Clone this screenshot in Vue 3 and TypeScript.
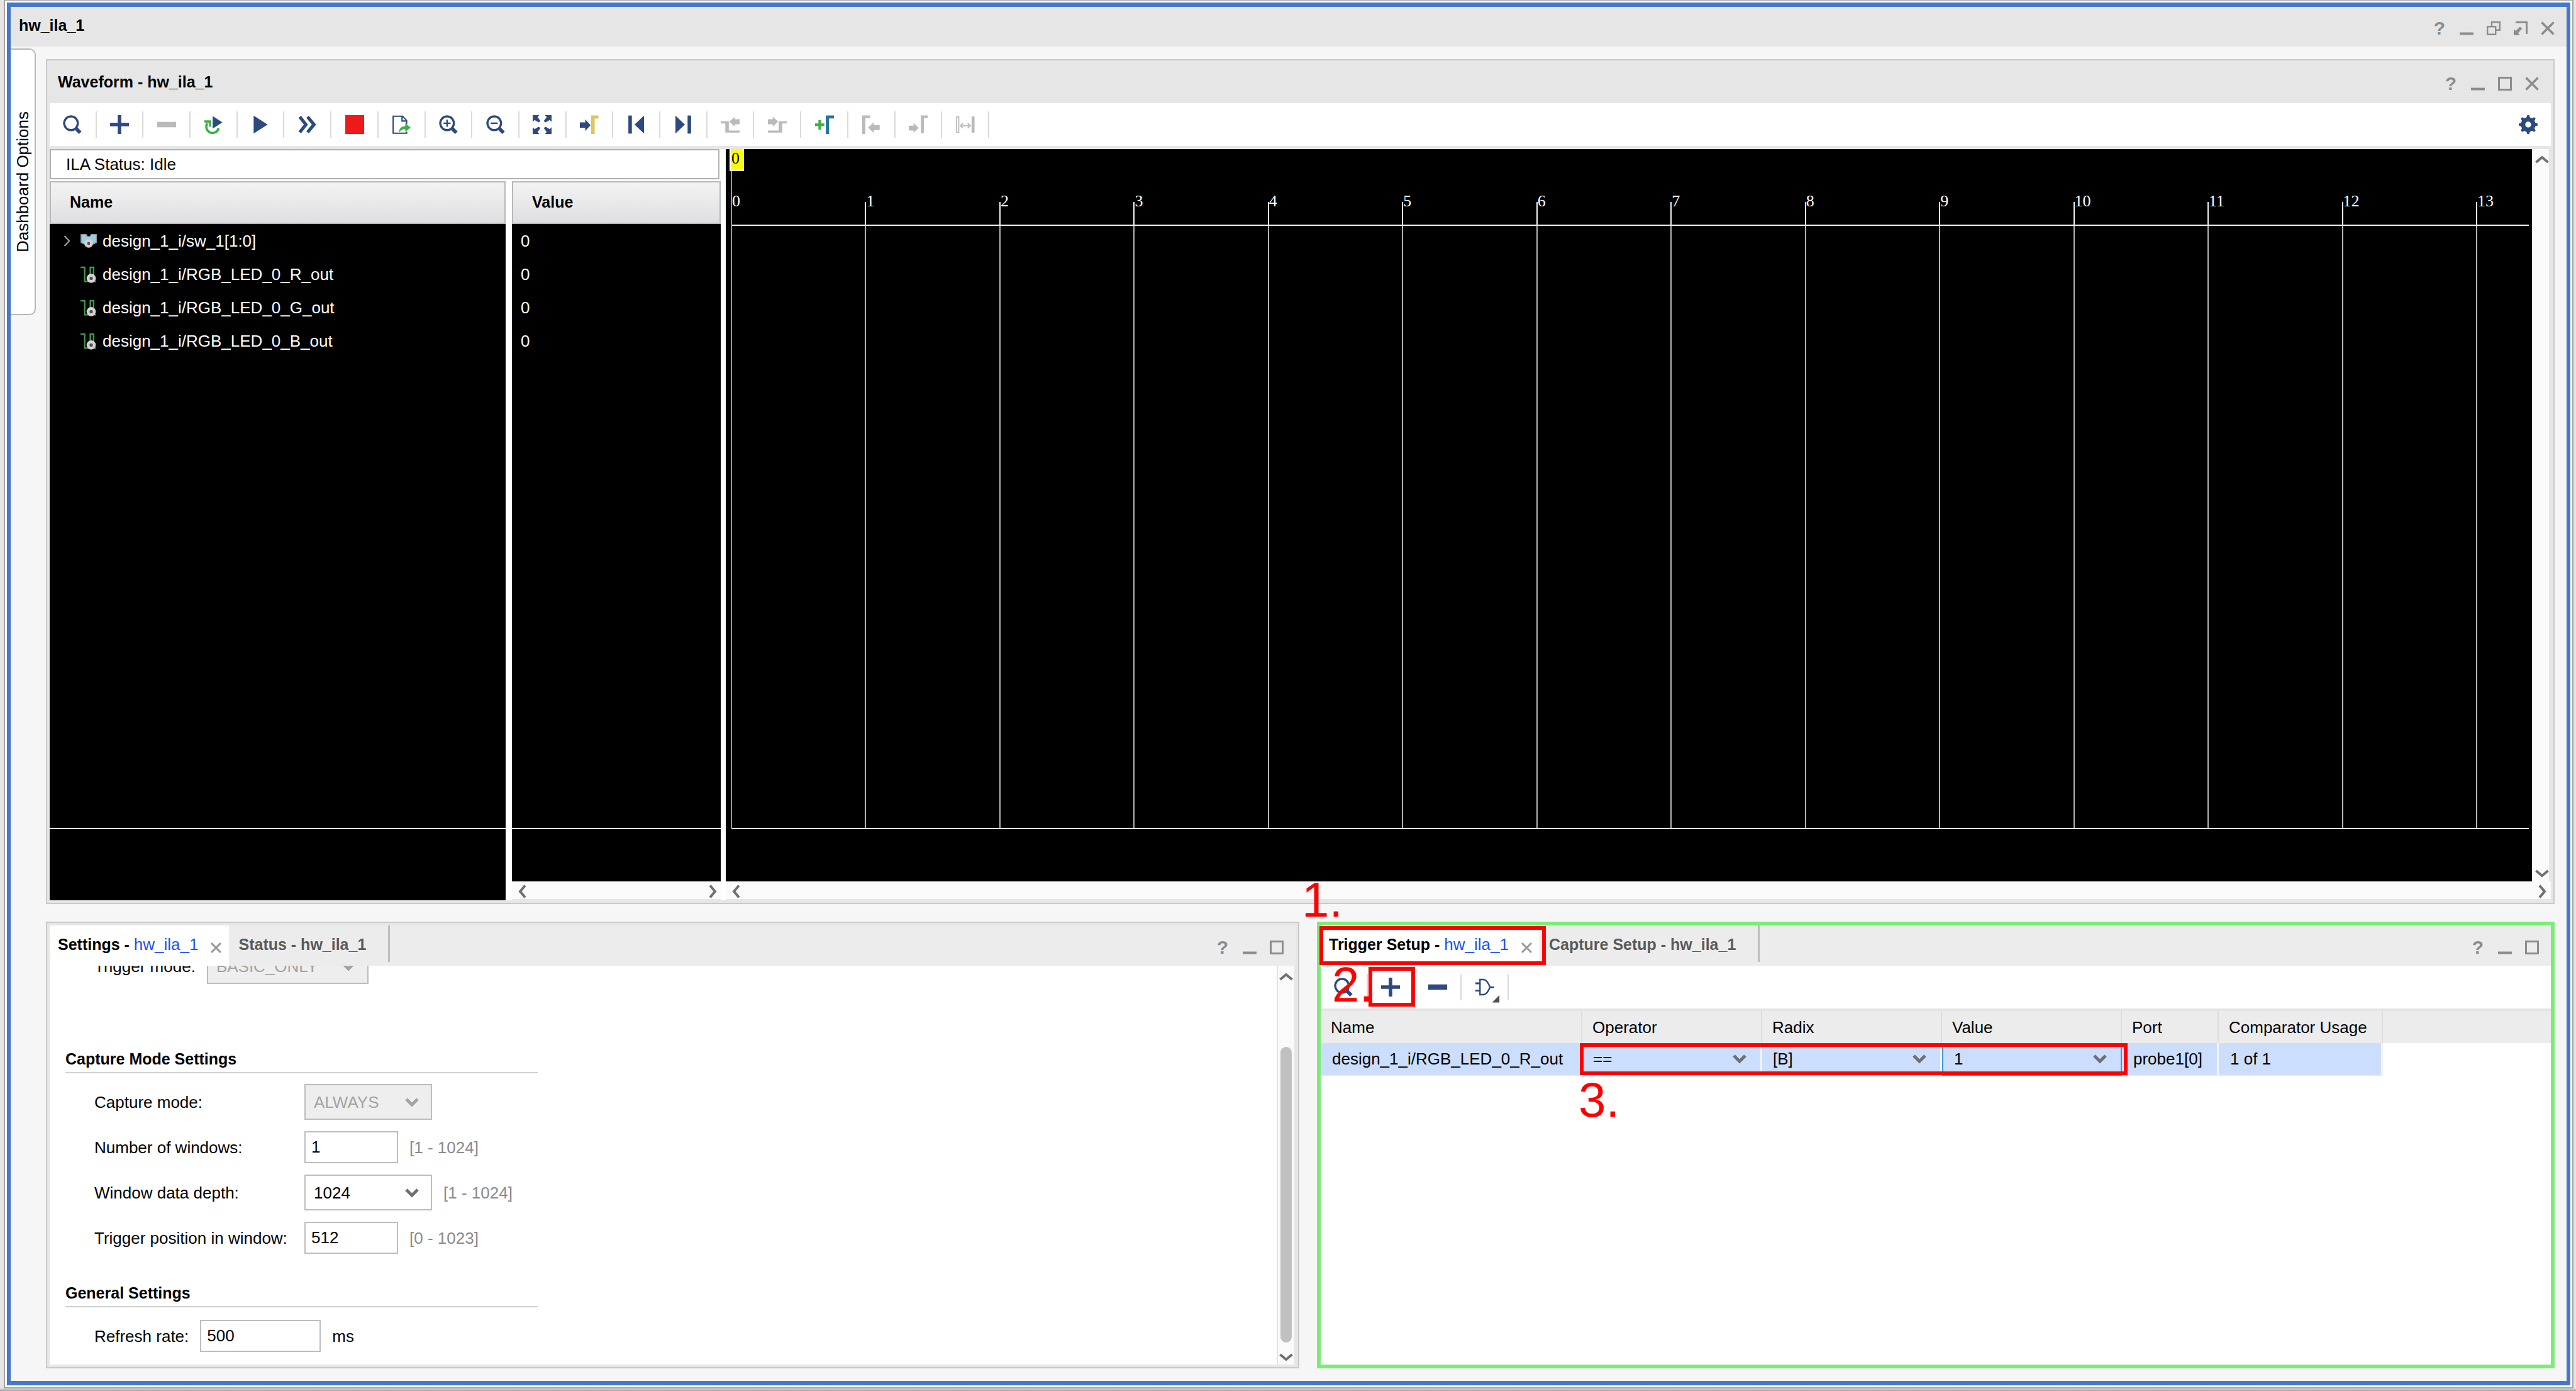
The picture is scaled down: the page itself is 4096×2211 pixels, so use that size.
<script setup lang="ts">
import { ref } from 'vue'

interface Shape {
  d: string
  fill?: string
  stroke?: string
  width?: number
}
interface Tool {
  id: string
  label: string
  shapes: Shape[]
  disabled?: boolean
  divider?: boolean
}

const navy = '#2c4a80'
const grey = '#bababa'
const green = '#3cb043'

const search: Shape[] = [
  { d: 'M6 .9a5 5.1 0 1 0 .01 0z', stroke: navy, width: 1.6 },
  { d: 'M9.6 9.8L12.9 13.1', stroke: navy, width: 2.7 },
]
const plus: Shape[] = [{ d: 'M5.7 0h2.6v5.7H14v2.6H8.3V14H5.7V8.3H0V5.7h5.7z', fill: navy }]

const waveTools: Tool[] = [
  { id: 'search', label: 'Search', shapes: search },
  { id: 'add', label: 'Add', shapes: plus },
  { id: 'remove', label: 'Remove', disabled: true, shapes: [{ d: 'M0 5h14v4H0z', fill: grey }] },
  {
    id: 'auto',
    label: 'Auto re-trigger',
    shapes: [
      { d: 'M2.6 6.2A4.6 4.6 0 1 0 11 9.6', stroke: green, width: 1.7 },
      { d: 'M.4 3.8h5v4.8H3.9V5.9L.4 5.4z', fill: green },
      { d: 'M6.6 .7L13.8 5.4L6.6 10z', fill: navy },
    ],
  },
  { id: 'run', label: 'Run trigger', shapes: [{ d: 'M2 .3L12.4 7L2 13.7z', fill: navy }] },
  {
    id: 'immediate',
    label: 'Run trigger immediate',
    shapes: [
      { d: 'M1.2 1.2L5.8 7L1.2 12.8', stroke: navy, width: 2.4 },
      { d: 'M7 1.2L11.8 7L7 12.8', stroke: navy, width: 2.4 },
    ],
  },
  { id: 'stop', label: 'Stop trigger', shapes: [{ d: 'M0 0h14v14H0z', fill: '#ee1a1a' }] },
  {
    id: 'export',
    label: 'Export data',
    shapes: [
      { d: 'M11 6.6V4L8 .8H1v12.6h10v-1.2M7.6 1v3.4h3.2', stroke: navy, width: 1 },
      { d: 'M5.4 13C5.4 9.8 7 8.4 10 8.2V6L14 9.2L10 12.4V10.4C8 10.4 6.6 11.2 5.4 13z', fill: green },
    ],
  },
  {
    id: 'zoomin',
    label: 'Zoom in',
    shapes: [...search, { d: 'M3.4 6h5.2M6 3.4v5.2', stroke: navy, width: 1.1 }],
  },
  {
    id: 'zoomout',
    label: 'Zoom out',
    shapes: [...search, { d: 'M3.4 6h5.2', stroke: navy, width: 1.1 }],
  },
  {
    id: 'fit',
    label: 'Zoom fit',
    shapes: [
      { d: 'M0 0h5L3.6 1.4L5.8 4.4L4.4 5.4L1.4 3.6L0 5z', fill: navy },
      { d: 'M14 0v5L12.6 3.6L9.6 5.4L8.2 4.4L10.4 1.4L9 0z', fill: navy },
      { d: 'M0 14V9L1.4 10.4L4.4 8.6L5.8 9.6L3.6 12.6L5 14z', fill: navy },
      { d: 'M14 14H9L10.4 12.6L8.2 9.6L9.6 8.6L12.6 10.4L14 9z', fill: navy },
    ],
  },
  {
    id: 'cursor',
    label: 'Go to cursor',
    shapes: [
      { d: 'M0 5.4h4V3.2L8 7.5L4 11.8V9.4H0z', fill: navy },
      { d: 'M8.4 .2h5.4v2.4H11V14H8.4z', fill: '#dfc55a' },
    ],
  },
  {
    id: 'first',
    label: 'Go to first',
    shapes: [
      { d: 'M1 .3h2.6v13.4H1z', fill: navy },
      { d: 'M12.6 .3v13.4L5.6 7z', fill: navy },
    ],
  },
  {
    id: 'last',
    label: 'Go to last',
    shapes: [
      { d: 'M10.4 .3H13v13.4h-2.6z', fill: navy },
      { d: 'M1.4 .3v13.4L8.4 7z', fill: navy },
    ],
  },
  {
    id: 'prev',
    label: 'Previous transition',
    disabled: true,
    shapes: [
      { d: 'M0 4.6h6v6.8h8V13H3.4V6.2H0z', fill: grey },
      { d: 'M6.4 4.8L10.4 1.2V3H14v3.8h-3.6v1.8z', fill: grey },
    ],
  },
  {
    id: 'next',
    label: 'Next transition',
    disabled: true,
    shapes: [
      { d: 'M14 4.6H8v6.8H0V13h10.6V6.2H14z', fill: grey },
      { d: 'M7.6 4.8L3.6 1.2V3H0v3.8h3.6v1.8z', fill: grey },
    ],
  },
  {
    id: 'marker',
    label: 'Add marker',
    shapes: [
      { d: 'M2.5 3.6h2v2.6h2.4v2H4.5v2.6h-2V8.2H0v-2h2.5z', fill: green },
      { d: 'M8 .2h6v2.2h-3.6V14H8z', fill: '#2472a8' },
    ],
  },
  {
    id: 'prevmarker',
    label: 'Previous marker',
    disabled: true,
    shapes: [
      { d: 'M.4 .2h6v2H2.8V14H.4z', fill: grey },
      { d: 'M4.8 9.2L9 5.4v2h4.4v3.8H9v2z', fill: grey },
    ],
  },
  {
    id: 'nextmarker',
    label: 'Next marker',
    disabled: true,
    shapes: [
      { d: 'M9 .2h5v2h-2.8V13.4H9z', fill: grey },
      { d: 'M7.4 9.4L3.6 5.8v2H0v3.6h3.6v1.8z', fill: grey },
    ],
  },
  {
    id: 'swap',
    label: 'Swap cursors',
    disabled: true,
    shapes: [
      { d: 'M.5 1.2h1.6v11.6H.5z', stroke: grey, width: 0.8 },
      { d: 'M11.6 1h2.2v12h-2.2z', fill: grey },
      { d: 'M3.6 7.8h6.8M5.2 6L3.4 7.8L5.2 9.6M8.8 6L10.6 7.8L8.8 9.6', stroke: grey, width: 0.9 },
    ],
  },
]

const triggerTools: Tool[] = [
  { id: 'tsearch', label: 'Search probes', shapes: search },
  { id: 'tadd', label: 'Add probes', divider: false, shapes: plus },
  { id: 'tremove', label: 'Remove probes', shapes: [{ d: 'M0 5h14v4H0z', fill: navy }] },
  {
    id: 'gate',
    label: 'Trigger condition',
    shapes: [
      { d: 'M3.4 1.4H6C8.4 1.6 9.6 3.8 10.8 7C9.6 10.2 8.4 12.4 6 12.6H3.4z', stroke: navy, width: 1.1 },
      { d: 'M0 4.2h3.4M0 9.6h3.4M10.6 7.2H14', stroke: navy, width: 1.3 },
      { d: 'M17.8 13v5.4h-5.4z', fill: '#505050' },
    ],
  },
]

const winIcons: Record<string, Shape[]> = {
  Minimize: [{ d: 'M0 17.5h22v4H0z', fill: '#8c8c8c' }],
  Maximize: [{ d: 'M1.5 1.5h19v19h-19z', stroke: '#8c8c8c', width: 3 }],
  Restore: [{ d: 'M1.2 8.2h13v12.6h-13zM8 8V1.2h12.8v12.6H15', stroke: '#8c8c8c', width: 2.4 }],
  Float: [
    { d: 'M3 1.5h17.5V20', stroke: '#8c8c8c', width: 3 },
    { d: 'M0 22V12.4L3.2 15L10 8.4L13.2 11.6L7 18.4L9.6 22z', fill: '#8c8c8c' },
  ],
  Close: [{ d: 'M1.5 1.5L20.5 20.5M20.5 1.5L1.5 20.5', stroke: '#8c8c8c', width: 3.6 }],
}
const outerButtons = ['Minimize', 'Restore', 'Float', 'Close']
const waveButtons = ['Minimize', 'Maximize', 'Close']
const dockButtons = ['Minimize', 'Maximize']

const signals = [
  { name: 'design_1_i/sw_1[1:0]', value: '0', bus: true },
  { name: 'design_1_i/RGB_LED_0_R_out', value: '0', bus: false },
  { name: 'design_1_i/RGB_LED_0_G_out', value: '0', bus: false },
  { name: 'design_1_i/RGB_LED_0_B_out', value: '0', bus: false },
]
const ticks = Array.from({ length: 14 }, (_, i) => i)

const windows = ref('1')
const position = ref('512')
const refresh = ref('500')
const gearTeeth = [0, 45, 90, 135, 180, 225, 270, 315]
</script>

<template>
  <div class="desktop">
    <main class="window">
      <header class="titlebar outer">
        <h1>hw_ila_1</h1>
        <div class="winbtns">
          <button type="button" class="help" aria-label="Help">?</button>
          <button v-for="b in outerButtons" :key="b" type="button" :aria-label="b">
            <svg viewBox="0 0 22 22"><path v-for="(s, i) in winIcons[b]" :key="i" :d="s.d" :fill="s.fill ?? 'none'" :stroke="s.stroke" :stroke-width="s.width" /></svg>
          </button>
        </div>
      </header>

      <div class="work">
        <button type="button" class="sidetab"><span>Dashboard Options</span></button>

        <div class="docks">
          <section class="panel wave">
            <header class="titlebar">
              <h2>Waveform - hw_ila_1</h2>
              <div class="winbtns">
                <button type="button" class="help" aria-label="Help">?</button>
                <button v-for="b in waveButtons" :key="b" type="button" :aria-label="b">
                  <svg viewBox="0 0 22 22"><path v-for="(s, i) in winIcons[b]" :key="i" :d="s.d" :fill="s.fill ?? 'none'" :stroke="s.stroke" :stroke-width="s.width" /></svg>
                </button>
              </div>
            </header>

            <div class="toolbar">
              <div class="tools twenty">
                <button v-for="t in waveTools" :key="t.id" type="button" :disabled="t.disabled" :aria-label="t.label">
                  <svg viewBox="0 0 14 14"><path v-for="(s, i) in t.shapes" :key="i" :d="s.d" :fill="s.fill ?? 'none'" :stroke="s.stroke" :stroke-width="s.width" /></svg>
                </button>
              </div>
              <button type="button" class="gear" aria-label="Settings">
                <svg viewBox="-7 -7 14 14">
                  <circle r="3.8" fill="none" stroke="#2c4a80" stroke-width="3.2" />
                  <path v-for="a in gearTeeth" :key="a" d="M-1.5 -4.8L-.7 -7H.7L1.5 -4.8z" fill="#2c4a80" :transform="`rotate(${a})`" />
                </svg>
              </button>
            </div>

            <div class="wavebody">
              <div class="lists">
                <p class="status">ILA Status: Idle</p>
                <div class="cols">
                  <div class="col names">
                    <h3>Name</h3>
                    <ul class="rows">
                      <li v-for="s in signals" :key="s.name">
                        <svg class="expander" viewBox="0 0 11 18"><path v-if="s.bus" d="M1.5 1L9 9L1.5 17" fill="none" stroke="#9a9a9a" stroke-width="2.4" /></svg>
                        <svg v-if="s.bus" class="sig" viewBox="0 0 26 26">
                          <path d="M.8 2.8H9L11 6H15L17 2.8H25.2V15.5L20 18H6L.8 15.5z" fill="#a1cde0" stroke="#8a969c" stroke-width="1.6" />
                          <circle cx="13" cy="17" r="4.6" fill="#555" stroke="#d6d2d4" stroke-width="4.4" />
                        </svg>
                        <svg v-else class="sig" viewBox="0 0 26 26">
                          <path d="M0 2H6.6V24.4H25M15.6 22V2H20.8V14" fill="none" stroke="#3f9a4c" stroke-width="2.4" />
                          <circle cx="17" cy="19.4" r="5" fill="#555" stroke="#d6d2d4" stroke-width="4.6" />
                        </svg>
                        <span>{{ s.name }}</span>
                      </li>
                    </ul>
                    <div class="tail tall"></div>
                  </div>
                  <div class="col values">
                    <h3>Value</h3>
                    <ul class="rows">
                      <li v-for="s in signals" :key="s.name">{{ s.value }}</li>
                    </ul>
                    <div class="tail"></div>
                    <div class="hscroll">
                      <svg viewBox="0 0 13 22"><path d="M11 1.5L3 11L11 20.5" /></svg>
                      <svg viewBox="0 0 13 22"><path d="M2 1.5L10 11L2 20.5" /></svg>
                    </div>
                  </div>
                </div>
              </div>

              <div class="scope">
                <div class="scoperow">
                  <div class="screen">
                    <div class="plot">
                      <div class="ruler">
                        <div v-for="t in ticks" :key="t" class="tick"><span>{{ t }}</span></div>
                      </div>
                      <div class="lines"><i v-for="t in ticks" :key="t"></i></div>
                      <div class="cursor"></div>
                      <span class="flag">0</span>
                    </div>
                    <div class="tail"></div>
                  </div>
                  <div class="vscroll">
                    <svg viewBox="0 0 22 13"><path d="M1.5 11L11 3L20.5 11" /></svg>
                    <svg viewBox="0 0 22 13"><path d="M1.5 2L11 10L20.5 2" /></svg>
                  </div>
                </div>
                <div class="hscroll">
                  <svg viewBox="0 0 13 22"><path d="M11 1.5L3 11L11 20.5" /></svg>
                  <svg viewBox="0 0 13 22"><path d="M2 1.5L10 11L2 20.5" /></svg>
                </div>
              </div>
            </div>
          </section>

          <section class="panel settings">
            <header class="tabs">
              <div class="tab active">
                <span><b>Settings - </b><a href="#settings">hw_ila_1</a></span>
                <button type="button" class="x" aria-label="Close tab"><svg viewBox="0 0 17 17"><path d="M1 1L16 16M16 1L1 16" /></svg></button>
              </div>
              <button type="button" class="tab idle">Status - hw_ila_1</button>
              <div class="winbtns">
                <button type="button" class="help" aria-label="Help">?</button>
                <button v-for="b in dockButtons" :key="b" type="button" :aria-label="b">
                  <svg viewBox="0 0 22 22"><path v-for="(s, i) in winIcons[b]" :key="i" :d="s.d" :fill="s.fill ?? 'none'" :stroke="s.stroke" :stroke-width="s.width" /></svg>
                </button>
              </div>
            </header>
            <div class="scrollarea">
              <form class="form" @submit.prevent>
                <div class="field">
                  <label for="tmode">Trigger mode:</label>
                  <div class="combo wide off">
                    <select id="tmode" disabled><option>BASIC_ONLY</option></select>
                    <svg viewBox="0 0 22 14"><path d="M2 2L11 11L20 2" /></svg>
                  </div>
                </div>
                <fieldset class="capture">
                  <legend>Capture Mode Settings</legend>
                  <div class="field">
                    <label for="cmode">Capture mode:</label>
                    <div class="combo off">
                      <select id="cmode" disabled><option>ALWAYS</option></select>
                      <svg viewBox="0 0 22 14"><path d="M2 2L11 11L20 2" /></svg>
                    </div>
                  </div>
                  <div class="field">
                    <label for="nwin">Number of windows:</label>
                    <input id="nwin" v-model="windows" type="text" />
                    <span class="hint">[1 - 1024]</span>
                  </div>
                  <div class="field">
                    <label for="depth">Window data depth:</label>
                    <div class="combo">
                      <select id="depth"><option>1024</option></select>
                      <svg viewBox="0 0 22 14"><path d="M2 2L11 11L20 2" /></svg>
                    </div>
                    <span class="hint">[1 - 1024]</span>
                  </div>
                  <div class="field">
                    <label for="tpos">Trigger position in window:</label>
                    <input id="tpos" v-model="position" type="text" />
                    <span class="hint">[0 - 1023]</span>
                  </div>
                </fieldset>
                <fieldset class="general">
                  <legend>General Settings</legend>
                  <div class="field">
                    <label for="rate">Refresh rate:</label>
                    <input id="rate" v-model="refresh" class="wider" type="text" />
                    <span>ms</span>
                  </div>
                </fieldset>
              </form>
              <div class="vbar">
                <svg viewBox="0 0 22 13"><path d="M1.5 11L11 3L20.5 11" /></svg>
                <div class="thumb"></div>
                <svg viewBox="0 0 22 13"><path d="M1.5 2L11 10L20.5 2" /></svg>
              </div>
            </div>
          </section>

          <section class="panel trigger">
            <header class="tabs">
              <div class="tab active">
                <span><b>Trigger Setup - </b><a href="#trigger">hw_ila_1</a></span>
                <button type="button" class="x" aria-label="Close tab"><svg viewBox="0 0 17 17"><path d="M1 1L16 16M16 1L1 16" /></svg></button>
              </div>
              <button type="button" class="tab idle">Capture Setup - hw_ila_1</button>
              <div class="winbtns">
                <button type="button" class="help" aria-label="Help">?</button>
                <button v-for="b in dockButtons" :key="b" type="button" :aria-label="b">
                  <svg viewBox="0 0 22 22"><path v-for="(s, i) in winIcons[b]" :key="i" :d="s.d" :fill="s.fill ?? 'none'" :stroke="s.stroke" :stroke-width="s.width" /></svg>
                </button>
              </div>
            </header>
            <div class="toolbar">
              <div class="tools four">
                <button v-for="t in triggerTools" :key="t.id" type="button" :class="{ plain: t.divider === false }" :aria-label="t.label">
                  <svg viewBox="0 0 14 14"><path v-for="(s, i) in t.shapes" :key="i" :d="s.d" :fill="s.fill ?? 'none'" :stroke="s.stroke" :stroke-width="s.width" /></svg>
                </button>
              </div>
            </div>
            <table>
              <colgroup>
                <col class="c-name" /><col class="c-edit" /><col class="c-edit" /><col class="c-edit" /><col class="c-port" /><col class="c-usage" /><col />
              </colgroup>
              <thead>
                <tr>
                  <th scope="col">Name</th>
                  <th scope="col">Operator</th>
                  <th scope="col">Radix</th>
                  <th scope="col">Value</th>
                  <th scope="col">Port</th>
                  <th scope="col">Comparator Usage</th>
                  <td></td>
                </tr>
              </thead>
              <tbody>
                <tr>
                  <td>design_1_i/RGB_LED_0_R_out</td>
                  <td>
                    <div class="combo cell">
                      <select aria-label="Operator"><option>==</option></select>
                      <svg viewBox="0 0 22 14"><path d="M2 2L11 11L20 2" /></svg>
                    </div>
                  </td>
                  <td>
                    <div class="combo cell">
                      <select aria-label="Radix"><option>[B]</option></select>
                      <svg viewBox="0 0 22 14"><path d="M2 2L11 11L20 2" /></svg>
                    </div>
                  </td>
                  <td class="focus">
                    <div class="combo cell">
                      <select aria-label="Value"><option>1</option></select>
                      <svg viewBox="0 0 22 14"><path d="M2 2L11 11L20 2" /></svg>
                    </div>
                  </td>
                  <td>probe1[0]</td>
                  <td>1 of 1</td>
                  <td class="rest"></td>
                </tr>
              </tbody>
            </table>

            <div class="box box-tab"></div>
            <div class="box box-add"></div>
            <div class="box box-cells"></div>
            <span class="step step-1">1.</span>
            <span class="step step-2">2.</span>
            <span class="step step-3">3.</span>
          </section>
        </div>
      </div>
    </main>
  </div>
</template>

<style>
body {
  margin: 0;
}
</style>

<style scoped>
* {
  box-sizing: border-box;
}
.desktop {
  height: 100vh;
  display: flex;
  padding: 0 6px 5px 8px;
  background: linear-gradient(#ececec, #a2a2a2) bottom / 100% 5px no-repeat, #e6e4e4;
  font-family: 'Liberation Sans', Arial, sans-serif;
  font-size: 26px;
  line-height: 30px;
  color: #000;
}
button {
  margin: 0;
  padding: 0;
  border: 0;
  background: none;
  font: inherit;
  color: inherit;
}
svg {
  display: block;
  overflow: visible;
}
h1,
h2,
h3,
p,
ul {
  margin: 0;
  padding: 0;
  list-style: none;
}
h1,
h2,
h3,
b,
legend {
  font-size: 25px;
  font-weight: bold;
}
.window {
  flex: 1;
  min-width: 0;
  display: flex;
  flex-direction: column;
  border: 7px solid #4478cc;
  border-left-width: 6px;
  border-right-width: 6px;
  margin: 4px 3px 4px 3px;
  outline: 3px solid #fff;
  box-shadow: 0 0 0 5px #a4a4a4;
  background: #f6f6f6;
}
.titlebar {
  display: flex;
  justify-content: space-between;
  height: 68px;
  align-items: center;
  padding: 0 19px 0 13px;
  background: #e6e6e6;
}
.titlebar.outer {
  height: 63px;
  flex: none;
}
.outer h1 {
  padding-bottom: 6px;
}
.winbtns {
  display: flex;
  align-items: center;
  gap: 21px;
  margin-left: auto;
  padding-top: 5px;
}
.winbtns button {
  width: 22px;
  height: 22px;
}
.winbtns .help {
  font-size: 30px;
  line-height: 22px;
  font-weight: bold;
  color: #8c8c8c;
}
.work {
  flex: 1;
  min-height: 0;
  display: flex;
  align-items: flex-start;
}
.sidetab {
  width: 40px;
  height: 424px;
  margin-top: 3px;
  display: flex;
  align-items: center;
  justify-content: center;
  background: #fff;
  border: 2px solid #b8b8b8;
  border-left: 0;
  border-radius: 0 10px 10px 0;
}
.sidetab span {
  writing-mode: vertical-rl;
  transform: rotate(180deg);
  white-space: nowrap;
}
.docks {
  flex: 1;
  min-width: 0;
  height: 100%;
  padding: 20px 19px 20px 16px;
  display: grid;
  grid-template-columns: 1993fr 1968fr;
  grid-template-rows: 1344fr 710fr;
  gap: 28px;
}
.panel {
  min-width: 0;
  min-height: 0;
  display: flex;
  flex-direction: column;
  border: 2px solid #c9c9c9;
  padding: 4px;
  background: #e6e6e6;
}
.wave {
  grid-column: 1 / 3;
  padding-top: 0;
}
.toolbar {
  flex: none;
  height: 68px;
  display: flex;
  align-items: center;
  justify-content: space-between;
  padding-right: 21px;
  background: #fff;
}
.tools {
  display: grid;
}
.twenty {
  width: 1494px;
  grid-template-columns: repeat(20, 1fr);
}
.four {
  width: 299px;
  grid-template-columns: repeat(4, 1fr);
}
.tools button {
  height: 42px;
  display: flex;
  align-items: center;
  justify-content: center;
  border-right: 2px solid #dadada;
}
.tools .plain {
  border-right-color: transparent;
}
.tools svg,
.gear svg {
  width: 30px;
  height: 30px;
}
.wavebody {
  flex: 1;
  min-height: 0;
  display: flex;
  margin-top: 5px;
  background: #fff;
}
.lists {
  width: 1067px;
  flex: none;
  display: flex;
  flex-direction: column;
}
.status {
  height: 48px;
  padding: 7px 24px;
  border: 2px solid #b2b2b2;
  margin: 0 2px 3px 0;
}
.cols {
  flex: 1;
  min-height: 0;
  display: flex;
  gap: 10px;
}
.col {
  display: flex;
  flex-direction: column;
}
.names {
  width: 725px;
}
.values {
  flex: 1;
}
.col h3 {
  height: 68px;
  padding: 16px 30px;
  border: 2px solid #b8b8b8;
  background: linear-gradient(#f3f3f3, #dfdfe2);
}
.rows {
  flex: 1;
  background: #000;
  color: #fff;
  border-bottom: 2px solid #fff;
}
.rows li {
  height: 53px;
  display: flex;
  align-items: center;
}
.names li {
  padding-left: 22px;
}
.values li {
  padding-left: 14px;
}
.expander {
  width: 11px;
  height: 18px;
  margin-right: 16px;
}
.sig {
  width: 26px;
  height: 26px;
  margin-right: 9px;
}
.tail {
  height: 83px;
  flex: none;
  background: #000;
}
.tail.tall {
  height: 113px;
}
.hscroll {
  flex: none;
  height: 30px;
  display: flex;
  justify-content: space-between;
  align-items: center;
  padding: 4px 6px 0 10px;
  background: #fafafa;
  border-bottom: 2px solid #e6e6e6;
}
.hscroll svg {
  width: 13px;
  height: 22px;
}
.hscroll path,
.vscroll path,
.vbar path,
.combo path {
  fill: none;
  stroke: #707070;
  stroke-width: 4;
}
.scope {
  flex: 1;
  min-width: 0;
  margin-left: 8px;
  display: flex;
  flex-direction: column;
}
.scoperow {
  flex: 1;
  min-height: 0;
  display: flex;
}
.screen {
  flex: 1;
  min-width: 0;
  display: flex;
  flex-direction: column;
  padding: 0 5px 0 8px;
  background: #000;
}
.plot {
  position: relative;
  flex: 1;
  display: flex;
  flex-direction: column;
  font-family: 'Liberation Serif', 'Times New Roman', serif;
  color: #fff;
}
.ruler,
.lines {
  display: grid;
  grid-template-columns: repeat(13, 2134fr) 840fr;
  border-bottom: 2px solid #f0f0f0;
}
.ruler {
  height: 122px;
  align-items: end;
}
.tick {
  height: 50px;
  display: flex;
}
.tick span {
  line-height: 26px;
}
.tick::before {
  content: '';
  width: 2px;
  height: 36px;
  align-self: flex-end;
  background: #f0f0f0;
}
.lines {
  flex: 1;
}
.lines i {
  border-left: 2px solid #b4b4b4;
}
.cursor {
  position: absolute;
  left: 0;
  top: 0;
  bottom: 0;
  width: 2px;
  background: #a8a838;
}
.flag {
  position: absolute;
  left: -2px;
  top: 0;
  width: 23px;
  height: 35px;
  padding-left: 1px;
  line-height: 30px;
  background: #ff0;
  border: 2px solid #fff;
  border-top: 0;
  color: #000;
}
.vscroll {
  width: 30px;
  display: flex;
  flex-direction: column;
  justify-content: space-between;
  align-items: flex-end;
  padding: 10px 0 6px;
  background: #fafafa;
  border-right: 3px solid #e6e6e6;
}
.vscroll svg,
.vbar svg {
  flex: none;
  width: 22px;
  height: 13px;
}
.scope > .hscroll {
  padding-right: 7px;
}
.tabs {
  flex: none;
  height: 64px;
  display: flex;
  background: #ececec;
  padding-right: 19px;
}
.tab {
  display: flex;
  align-items: center;
  gap: 20px;
  white-space: nowrap;
  padding: 0 12px 5px 13px;
}
.active {
  background: #fff;
}
.tab span {
  white-space: pre;
}
.tab a {
  color: #1a53ef;
  text-decoration: none;
}
.x {
  width: 17px;
  height: 17px;
  margin-top: 12px;
}
.x path {
  stroke: #999;
  stroke-width: 3;
}
.idle {
  height: 58px;
  padding: 1px 35px 0 15px;
  border-right: 3px solid #bdbdbd;
  font-size: 25px;
  font-weight: bold;
  color: #5a5a5a;
}
.scrollarea {
  flex: 1;
  min-height: 0;
  display: flex;
  background: #fff;
}
.form {
  flex: 1;
  min-height: 0;
  overflow: hidden;
  display: flex;
  flex-direction: column;
  justify-content: flex-end;
  padding: 0 25px 17px;
}
fieldset {
  width: 751px;
  margin: 0;
  padding: 0;
  border: 0;
  flex: none;
  display: flex;
  flex-direction: column;
  gap: 15px;
}
legend {
  width: 100%;
  height: 38px;
  padding: 0;
  margin-bottom: 17px;
  border-bottom: 2px solid #d0d0d0;
}
.capture {
  margin-top: 104px;
}
.general {
  margin-top: 44px;
}
.field {
  flex: none;
  height: 57px;
  display: flex;
  align-items: center;
  gap: 18px;
  padding-left: 46px;
  white-space: nowrap;
}
.capture label {
  width: 316px;
}
input,
select {
  font: inherit;
  color: #000;
  border: 2px solid #bdbdbd;
  border-radius: 0;
  background: #fff;
  margin: 0;
}
input {
  width: 149px;
  height: 51px;
  padding: 0 9px;
}
input.wider {
  width: 192px;
}
.hint {
  color: #8a8a8a;
}
.combo {
  width: 203px;
  height: 57px;
  display: grid;
  align-items: center;
}
.combo.wide {
  width: 257px;
}
.combo > * {
  grid-area: 1 / 1;
}
select {
  appearance: none;
  width: 100%;
  height: 100%;
  padding: 0 13px;
}
.combo svg {
  width: 22px;
  height: 14px;
  justify-self: end;
  margin-right: 21px;
  pointer-events: none;
}
.combo path {
  stroke-width: 5;
}
.off select {
  background: #eee;
  color: #a3a3a3;
  opacity: 1;
}
.off path {
  stroke: #a3a3a3;
}
.vbar {
  width: 30px;
  display: flex;
  flex-direction: column;
  align-items: center;
  padding: 11px 0 5px;
  background: #fafafa;
  border-left: 2px solid #e2e2e2;
  border-right: 2px solid #e6e6e6;
}
.thumb {
  flex: 1;
  width: 18px;
  margin: 105px 0 17px;
  border-radius: 9px;
  background: #c0c0c0;
}
.trigger {
  position: relative;
  border: 6px solid #7bec76;
  padding: 0;
  background: #fff;
}
table {
  width: 100%;
  table-layout: fixed;
  border-collapse: separate;
  border-spacing: 0;
  border-top: 4px solid #e4e4e4;
}
.c-name {
  width: 416px;
}
.c-edit {
  width: 286px;
}
.c-port {
  width: 154px;
}
.c-usage {
  width: 261px;
}
thead tr {
  height: 51px;
  background: #ececec;
}
th {
  font-weight: normal;
  text-align: left;
  padding: 0 0 0 16px;
  border-right: 2px solid #dcdcdc;
}
tbody tr {
  height: 52px;
}
tbody td {
  padding: 0 0 0 18px;
  white-space: nowrap;
  background: #ccdefe;
  border-right: 3px solid #f4f6fb;
  border-bottom: 2px solid #e4e6ec;
}
tbody td:has(.cell) {
  padding: 0;
}
tbody .rest {
  background: #fff;
  border: 0;
}
tbody .focus {
  border: 2px solid #4a96d6;
  border-top: 0;
}
.combo.cell {
  width: 100%;
  height: 50px;
}
.cell select {
  border: 0;
  background: none;
  padding: 0 17px;
}
.combo.cell svg {
  margin-right: 22px;
}
.box {
  position: absolute;
  border: 6px solid #f00;
  pointer-events: none;
}
.box-tab {
  left: -2px;
  top: 1px;
  width: 360px;
  height: 62px;
}
.box-add {
  left: 76px;
  top: 66px;
  width: 74px;
  height: 63px;
}
.box-cells {
  left: 412px;
  top: 187px;
  width: 871px;
  height: 51px;
}
.step {
  position: absolute;
  font-size: 78px;
  line-height: 78px;
  color: #f00;
  pointer-events: none;
}
.step-1 {
  left: -30px;
  top: -80px;
}
.step-2 {
  left: 18px;
  top: 55px;
}
.step-3 {
  left: 410px;
  top: 238px;
}
</style>
